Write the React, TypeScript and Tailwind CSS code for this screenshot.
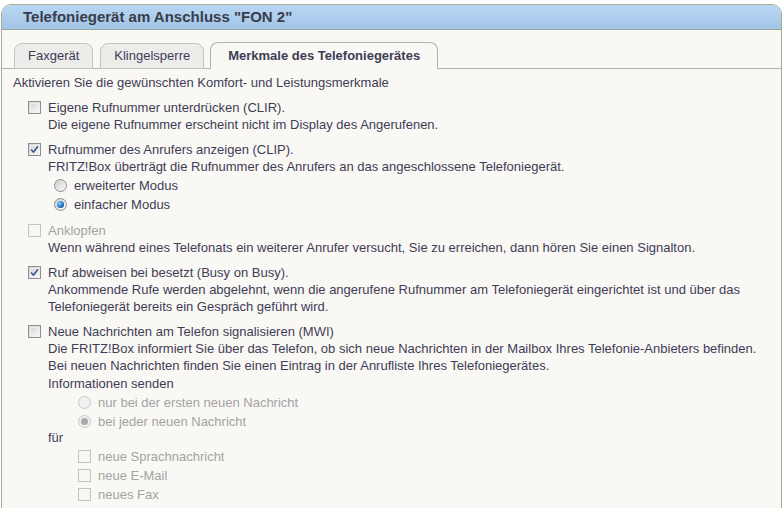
import React from 'react';

const TEXT = 'text-[#3f3d56]';
const MUTED = 'text-[#a3a3a3]';

function CheckBox({ checked = false, disabled = false }: { checked?: boolean; disabled?: boolean }) {
  return (
    <span
      className={`relative inline-block w-[13px] h-[13px] shrink-0 border ${
        disabled ? 'border-[#c4c4c4] bg-[#f6f6f4]' : 'border-[#8e8f8f] bg-gradient-to-br from-[#d2d2d2] to-[#f8f8f8]'
      }`}
    >
      {!disabled && <span className="absolute inset-[1px] border border-[#f4f4f4]/70" />}
      {checked && (
        <svg className="absolute left-[1px] top-[1px]" width="9" height="9" viewBox="0 0 9 9">
          <path d="M1 4.5 L3.5 7 L8 1.2" fill="none" stroke="#3a5590" strokeWidth="1.6" />
        </svg>
      )}
    </span>
  );
}

function Radio({ checked = false, disabled = false }: { checked?: boolean; disabled?: boolean }) {
  return (
    <span
      className={`relative inline-flex items-center justify-center w-[13px] h-[13px] shrink-0 rounded-full border ${
        disabled ? 'border-[#c8c8c8] bg-[#f0f0f0]' : 'border-[#8e8f8f] bg-gradient-to-br from-[#cfcfcf] to-[#fbfbfb]'
      }`}
    >
      {checked && (
        <span
          className={`w-[7px] h-[7px] rounded-full ${
            disabled ? 'bg-[#a8a8a8]' : 'bg-[radial-gradient(circle_at_35%_35%,#8fd0ff,#1d78c8_55%,#0b3a6e)]'
          }`}
        />
      )}
    </span>
  );
}

function Option({
  label,
  checked,
  disabled,
  children,
}: {
  label: string;
  checked?: boolean;
  disabled?: boolean;
  children?: React.ReactNode;
}) {
  return (
    <div className="flex items-start gap-[7px] mt-[8px]">
      <span className="mt-[2px]">
        <CheckBox checked={checked} disabled={disabled} />
      </span>
      <div className="leading-[17px]">
        <div className={disabled ? MUTED : ''}>{label}</div>
        {children}
      </div>
    </div>
  );
}

function RadioRow({ label, checked, disabled }: { label: string; checked?: boolean; disabled?: boolean }) {
  return (
    <div className="flex items-center gap-[7px] h-[19px]">
      <Radio checked={checked} disabled={disabled} />
      <span className={disabled ? MUTED : ''}>{label}</span>
    </div>
  );
}

function SubCheck({ label }: { label: string }) {
  return (
    <div className="flex items-center gap-[7px] h-[19px]">
      <CheckBox disabled />
      <span className={MUTED}>{label}</span>
    </div>
  );
}

export default function App() {
  const tabs = ['Faxgerät', 'Klingelsperre'];
  return (
    <div className={`w-[783px] h-[508px] overflow-hidden bg-white font-['Liberation_Sans',Arial,sans-serif] text-[13px] ${TEXT}`}>
      <div className="pt-[4px] pl-[1px]">
        <div className="w-[781px] h-[520px] rounded-t-[10px] border border-[#a4ae96] bg-[#f9f8f4] overflow-hidden">
          {/* Title bar */}
          <div className="h-[25px] flex items-center pl-[21px] bg-gradient-to-b from-[#b9d7f3] to-[#a2c4e6] border-b border-[#94a896]">
            <span className="font-bold text-[15px] text-[#3a3c4a]">Telefoniegerät am Anschluss "FON 2"</span>
          </div>

          {/* Tabs */}
          <div className="mt-[12px] flex items-end gap-[7px] pl-[12px] border-b border-[#b3b3b3] h-[27px]">
            {tabs.map(t => (
              <div
                key={t}
                className="h-[26px] -mb-px px-[13px] flex items-center rounded-t-[8px] border border-[#c4c4c4] bg-[#ececea]"
              >
                {t}
              </div>
            ))}
            <div className="h-[27px] -mb-px -ml-[1px] px-[17px] flex items-center rounded-t-[8px] border border-b-0 border-[#b3b3b3] bg-[#f9f8f4] font-bold">
              Merkmale des Telefoniegerätes
            </div>
          </div>

          {/* Content */}
          <div className="pt-[5px] pl-[11px] leading-[17px]">
            <div>Aktivieren Sie die gewünschten Komfort- und Leistungsmerkmale</div>

            <div className="pl-[15px]">
              <Option label="Eigene Rufnummer unterdrücken (CLIR).">
                <div>Die eigene Rufnummer erscheint nicht im Display des Angerufenen.</div>
              </Option>

              <Option label="Rufnummer des Anrufers anzeigen (CLIP)." checked>
                <div>FRITZ!Box überträgt die Rufnummer des Anrufers an das angeschlossene Telefoniegerät.</div>
                <div className="pl-[6px] pt-[1px]">
                  <RadioRow label="erweiterter Modus" />
                  <RadioRow label="einfacher Modus" checked />
                </div>
              </Option>

              <Option label="Anklopfen" disabled>
                <div>Wenn während eines Telefonats ein weiterer Anrufer versucht, Sie zu erreichen, dann hören Sie einen Signalton.</div>
              </Option>

              <Option label="Ruf abweisen bei besetzt (Busy on Busy)." checked>
                <div>
                  Ankommende Rufe werden abgelehnt, wenn die angerufene Rufnummer am Telefoniegerät eingerichtet ist und über das
                  <br />
                  Telefoniegerät bereits ein Gespräch geführt wird.
                </div>
              </Option>

              <Option label="Neue Nachrichten am Telefon signalisieren (MWI)">
                <div>Die FRITZ!Box informiert Sie über das Telefon, ob sich neue Nachrichten in der Mailbox Ihres Telefonie-Anbieters befinden.</div>
                <div>Bei neuen Nachrichten finden Sie einen Eintrag in der Anrufliste Ihres Telefoniegerätes.</div>
                <div className="mt-[1px]">Informationen senden</div>
                <div className="pl-[30px] pt-[1px]">
                  <RadioRow label="nur bei der ersten neuen Nachricht" disabled />
                  <RadioRow label="bei jeder neuen Nachricht" checked disabled />
                </div>
                <div className="-mt-[2px]">für</div>
                <div className="pl-[30px] pt-[1px]">
                  <SubCheck label="neue Sprachnachricht" />
                  <SubCheck label="neue E-Mail" />
                  <SubCheck label="neues Fax" />
                </div>
              </Option>
            </div>
          </div>
        </div>
      </div>
    </div>
  );
}
